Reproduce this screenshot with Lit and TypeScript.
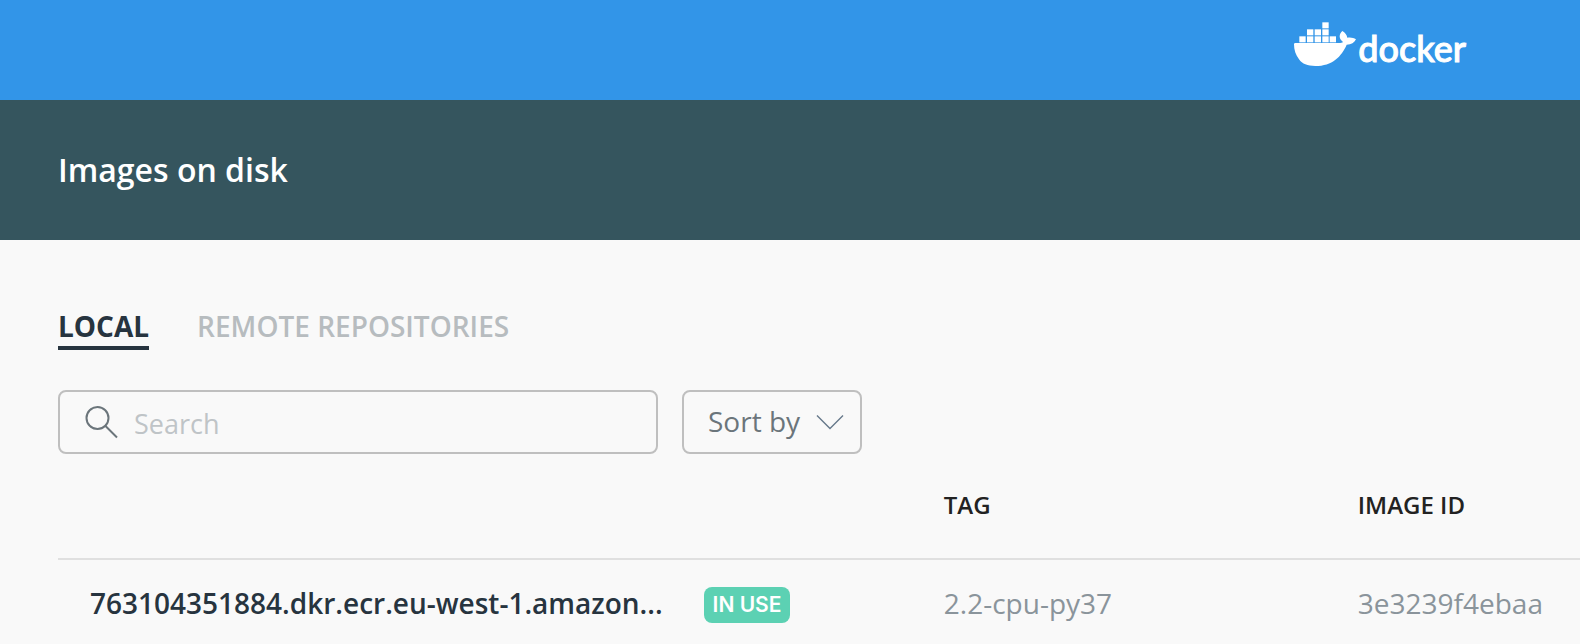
import { LitElement, html, css, svg } from "lit";
import { customElement, state } from "lit/decorators.js";

interface DiskImage {
  name: string;
  inUse: boolean;
  tag: string;
  id: string;
}

const IMAGES: DiskImage[] = [
  { name: "763104351884.dkr.ecr.eu-west-1.amazon...", inUse: true, tag: "2.2-cpu-py37", id: "3e3239f4ebaa" },
];

const CONTAINERS = [
  [85, 1],
  [39, 22], [62, 22], [85, 22],
  [16, 43], [39, 43], [62, 43], [85, 43], [107, 43],
];

@customElement("docker-logo")
export class DockerLogo extends LitElement {
  static styles = css`
    :host {
      display: flex;
      align-items: flex-start;
      gap: 2px;
      color: #fff;
    }
    .whale {
      width: 62px;
      height: 44px;
      fill: currentColor;
    }
    .word {
      font: 500 36px/44px Lato, sans-serif;
      -webkit-text-stroke: 1px currentColor;
      padding-top: 4px;
    }
  `;

  render() {
    return html`
      <svg class="whale" viewBox="0 0 186 132" aria-hidden="true">
        ${CONTAINERS.map(([x, y]) => svg`<rect x=${x} y=${y} width="19" height="18"></rect>`)}
        <path
          d="M5 63H134C141 63 145 62 147 60C140 55 137 49 137 43C137 36 141 31 145 27C153 32 159 39 160 47C169 45 179 47 186 52C181 62 172 68 158 68C143 103 115 132 64 132C40 132 25 126 15 112C5 99 0 83 0 67C0 64 2 63 5 63Z"
        ></path>
      </svg>
      <span class="word">docker</span>
    `;
  }
}

@customElement("app-root")
export class AppRoot extends LitElement {
  static styles = css`
    :host {
      display: block;
      min-height: 100vh;
      overflow: hidden;
      background: #f9f9f9;
      color: #27343f;
      font: 400 28px/40px "Open Sans", sans-serif;
    }
    .topbar {
      display: flex;
      justify-content: flex-end;
      height: 100px;
      box-sizing: border-box;
      padding: 22px 114px 0 58px;
      background: #3295e8;
    }
    .banner {
      display: flex;
      align-items: center;
      height: 140px;
      padding: 0 58px;
      background: #35555e;
      color: #fff;
    }
    .title {
      margin: 0;
      font-size: 32px;
      line-height: 44px;
      font-weight: 600;
    }
    .content {
      padding: 66px 0 0 58px;
    }
    .tabs {
      display: flex;
      gap: 48px;
    }
    .tab {
      padding: 0;
      border: 0;
      border-bottom: 4px solid transparent;
      background: none;
      font: inherit;
      font-weight: 600;
      color: #b7bcbf;
      text-transform: uppercase;
      cursor: pointer;
    }
    .tab.active {
      font-weight: 700;
      color: #27343f;
      border-bottom-color: #27343f;
    }
    .filters {
      display: flex;
      gap: 24px;
      margin-top: 40px;
    }
    .field {
      display: flex;
      align-items: center;
      box-sizing: border-box;
      height: 64px;
      border: 2px solid #bfbfbf;
      border-radius: 8px;
    }
    .search {
      width: 600px;
      gap: 16px;
      padding: 0 24px;
    }
    .search-icon {
      flex: none;
      width: 34px;
      height: 34px;
      fill: none;
      stroke: #6b757b;
      stroke-width: 2;
    }
    .search-input {
      flex: 1;
      min-width: 0;
      height: 40px;
      padding: 4px 0 0;
      border: 0;
      outline: 0;
      background: none;
      font: inherit;
      font-size: 27px;
      color: inherit;
    }
    .search-input::placeholder {
      color: #bfc4c7;
      opacity: 1;
    }
    .sort {
      gap: 15px;
      padding: 0 16px 0 24px;
      color: #6b757b;
    }
    .sort-select {
      appearance: none;
      padding: 0 0 2px;
      border: 0;
      outline: 0;
      background: none;
      font: inherit;
      color: inherit;
    }
    .chevron {
      flex: none;
      width: 28px;
      height: 16px;
      fill: none;
      stroke: #66788a;
      stroke-width: 1.4;
    }
    .images {
      width: 100%;
      margin-top: 28px;
      border-collapse: collapse;
      table-layout: fixed;
      text-align: left;
    }
    .col-name {
      width: 58.2%;
    }
    .col-tag {
      width: 27.2%;
    }
    .head {
      height: 77px;
      padding: 0 0 30px;
      border-bottom: 2px solid #e0e0e0;
      box-sizing: border-box;
      font-size: 24px;
      line-height: 36px;
      font-weight: 600;
      color: #222;
    }
    .cell {
      padding: 23px 0;
      color: #8a949b;
      white-space: nowrap;
    }
    .name-line {
      display: flex;
      align-items: flex-end;
      gap: 41px;
      padding-left: 32px;
    }
    .name {
      font-weight: 600;
      color: #27343f;
    }
    .badge {
      padding: 0 9px;
      border-radius: 8px;
      background: #5cd1b3;
      color: #fff;
      font: 600 21px/36px Inter, sans-serif;
    }
  `;

  @state() private tab = "Local";
  @state() private query = "";

  private renderTab(label: string) {
    const active = this.tab === label;
    return html`<button
      class="tab ${active ? "active" : ""}"
      role="tab"
      aria-selected=${active ? "true" : "false"}
      @click=${() => (this.tab = label)}
    >${label}</button>`;
  }

  render() {
    const rows = IMAGES.filter((i) => i.name.includes(this.query));
    return html`
      <header class="topbar"><docker-logo></docker-logo></header>
      <section class="banner"><h1 class="title">Images on disk</h1></section>
      <main class="content">
        <div class="tabs" role="tablist">
          ${this.renderTab("Local")}${this.renderTab("Remote repositories")}
        </div>
        <div class="filters">
          <label class="field search">
            <svg class="search-icon" viewBox="0 0 34 34" aria-hidden="true">
              <circle cx="13.5" cy="13" r="11"></circle>
              <path d="M21 20.5L33 32.5"></path>
            </svg>
            <input
              class="search-input"
              type="text"
              placeholder="Search"
              aria-label="Search"
              .value=${this.query}
              @input=${(e: Event) => (this.query = (e.target as HTMLInputElement).value)}
            />
          </label>
          <label class="field sort">
            <select class="sort-select" aria-label="Sort by">
              <option>Sort by</option>
            </select>
            <svg class="chevron" viewBox="0 0 28 16" aria-hidden="true">
              <path d="M1 1.5L14 14.5L27 1.5"></path>
            </svg>
          </label>
        </div>
        <table class="images">
          <thead>
            <tr>
              <th class="head col-name" scope="col" aria-label="Name"></th>
              <th class="head col-tag" scope="col">TAG</th>
              <th class="head" scope="col">IMAGE ID</th>
            </tr>
          </thead>
          <tbody>
            ${rows.map(
              (i) => html`<tr>
                <td class="cell">
                  <div class="name-line">
                    <span class="name">${i.name}</span>
                    ${i.inUse ? html`<span class="badge">IN USE</span>` : null}
                  </div>
                </td>
                <td class="cell">${i.tag}</td>
                <td class="cell">${i.id}</td>
              </tr>`
            )}
          </tbody>
        </table>
      </main>
    `;
  }
}
